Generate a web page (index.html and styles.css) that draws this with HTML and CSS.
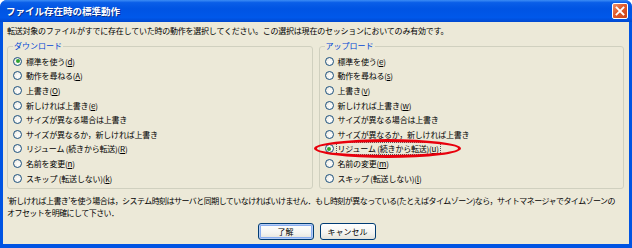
FILE: index.html
```html
<!DOCTYPE html>
<html lang="ja">
<head>
  <meta charset="UTF-8">
  <title>ファイル存在時の標準動作</title>
  <link rel="stylesheet" href="styles.css">
</head>
<body>
  <div class="window">
    <!-- Title bar -->
    <div class="titlebar">
      <span class="title">ファイル存在時の標準動作</span>
      <span class="close-btn">
        <svg width="10" height="10" viewBox="0 0 10 10"><path d="M1.5 1.5 L8.5 8.5 M8.5 1.5 L1.5 8.5" stroke="#fff" stroke-width="1.8" stroke-linecap="square"/></svg>
      </span>
    </div>

    <div class="client">
      <p class="intro">転送対象のファイルがすでに存在していた時の動作を選択してください。この選択は現在のセッションにおいてのみ有効です。</p>

      <div class="groups">
        <!-- Download -->
        <fieldset class="group">
          <legend>ダウンロード</legend>
          <div class="radio checked"><span class="mark"></span><span class="text">標準を使う(<u>d</u>)</span></div>
          <div class="radio"><span class="mark"></span><span class="text">動作を尋ねる(<u>A</u>)</span></div>
          <div class="radio"><span class="mark"></span><span class="text">上書き(<u>O</u>)</span></div>
          <div class="radio"><span class="mark"></span><span class="text">新しければ上書き(<u>e</u>)</span></div>
          <div class="radio"><span class="mark"></span><span class="text">サイズが異なる場合は上書き</span></div>
          <div class="radio"><span class="mark"></span><span class="text">サイズが異なるか，新しければ上書き</span></div>
          <div class="radio"><span class="mark"></span><span class="text">リジューム (続きから転送)(<u>R</u>)</span></div>
          <div class="radio"><span class="mark"></span><span class="text">名前を変更(<u>n</u>)</span></div>
          <div class="radio"><span class="mark"></span><span class="text">スキップ (転送しない)(<u>k</u>)</span></div>
        </fieldset>

        <!-- Upload -->
        <fieldset class="group">
          <legend>アップロード</legend>
          <div class="radio"><span class="mark"></span><span class="text">標準を使う(<u>e</u>)</span></div>
          <div class="radio"><span class="mark"></span><span class="text">動作を尋ねる(<u>s</u>)</span></div>
          <div class="radio"><span class="mark"></span><span class="text">上書き(<u>v</u>)</span></div>
          <div class="radio"><span class="mark"></span><span class="text">新しければ上書き(<u>w</u>)</span></div>
          <div class="radio"><span class="mark"></span><span class="text">サイズが異なる場合は上書き</span></div>
          <div class="radio"><span class="mark"></span><span class="text">サイズが異なるか，新しければ上書き</span></div>
          <div class="radio checked focused"><span class="mark"></span><span class="text">リジューム (続きから転送)(<u>u</u>)</span></div>
          <div class="radio"><span class="mark"></span><span class="text">名前の変更(<u>m</u>)</span></div>
          <div class="radio"><span class="mark"></span><span class="text">スキップ (転送しない)(<u>l</u>)</span></div>
        </fieldset>
      </div>

      <p class="note">'新しければ上書き'を使う場合は，システム時刻はサーバと同期していなければいけません．もし時刻が異なっている(たとえばタイムゾーン)なら，サイトマネージャでタイムゾーンの<br>オフセットを明確にして下さい．</p>

      <div class="buttons">
        <button class="btn btn-default">了解</button>
        <button class="btn">キャンセル</button>
      </div>
    </div>

    <!-- Red marker drawn over the screenshot -->
    <span class="marker"></span>
  </div>
</body>
</html>
```

FILE: styles.css
```css
*,
*::before,
*::after {
  box-sizing: border-box;
}

:root {
  --xp-blue: #0054e3;
  --xp-face: #ece9d8;
  --group-border: #d0d0bf;
  --legend-color: #0046d5;
  --text: #000000;
}

html,
body {
  margin: 0;
  padding: 0;
}

body {
  width: 632px;
  height: 248px;
  background: #ffffff;
  font-family: "Noto Sans CJK JP", "Liberation Sans", sans-serif;
  font-size: 8px;
  color: var(--text);
}

.window {
  position: relative;
  width: 632px;
  height: 248px;
  display: flex;
  flex-direction: column;
  background: var(--xp-blue);
  border-radius: 7px 7px 0 0;
  overflow: hidden;
}

/* Title bar */
.titlebar {
  height: 22px;
  flex: none;
  display: flex;
  align-items: center;
  justify-content: space-between;
  padding: 0 4px 0 6px;
  background: linear-gradient(to bottom, #3c8cf5 0%, #0a5ee8 12%, #0054e3 40%, #0058ea 80%, #0048d0 100%);
}

.title {
  color: #ffffff;
  font-weight: bold;
  font-size: 9.5px;
  text-shadow: 1px 1px 0 #0a2e8a;
}

.close-btn {
  width: 16px;
  height: 16px;
  display: flex;
  align-items: center;
  justify-content: center;
  border: 1px solid #ffffff;
  border-radius: 2px;
  background: linear-gradient(135deg, #f0926c 0%, #e05a2a 45%, #c8431a 100%);
}

/* Client area */
.client {
  flex: 1;
  margin: 0 3px 4px;
  padding: 3px 5px 0 4px;
  background: var(--xp-face);
  display: flex;
  flex-direction: column;
}

.intro {
  margin: 0;
  line-height: 12px;
  letter-spacing: -0.23px;
  white-space: nowrap;
}

.groups {
  display: flex;
  gap: 6px;
  margin-top: 3px;
}

.group {
  flex: 1;
  min-width: 0;
  margin: 0;
  padding: 2px 5px 3px 5px;
  border: 1px solid var(--group-border);
  border-radius: 3px;
}

.group legend {
  padding: 0 1px;
  margin-left: 0;
  line-height: 12px;
  color: var(--legend-color);
}

.radio {
  height: 14.6px;
  display: flex;
  align-items: center;
  gap: 2px;
  white-space: nowrap;
  letter-spacing: -0.2px;
}

.radio .mark {
  width: 9px;
  height: 9px;
  flex: none;
  border: 1px solid #1c5180;
  border-radius: 50%;
  background: radial-gradient(circle at 60% 60%, #ffffff 0%, #f4f3ee 50%, #dcdad0 100%);
  position: relative;
}

.radio.checked .mark::after {
  content: '';
  position: absolute;
  left: 1.5px;
  top: 1.5px;
  width: 4px;
  height: 4px;
  border-radius: 50%;
  background: #2fa32f;
}

.radio .text {
  line-height: 11px;
  padding: 0 1px;
  border: 1px dotted transparent;
}

.radio.focused .text {
  border-color: #555555;
}

u {
  text-underline-offset: 1px;
}

.note {
  margin: 6px 0 0;
  line-height: 12px;
  letter-spacing: -0.55px;
  white-space: nowrap;
}

.buttons {
  display: flex;
  justify-content: center;
  gap: 6px;
  margin-top: 4px;
  padding-left: 2px;
}

.btn {
  width: 56px;
  height: 17px;
  padding: 0;
  font-family: inherit;
  font-size: 8px;
  color: var(--text);
  border: 1px solid #003c74;
  border-radius: 3px;
  background: linear-gradient(to bottom, #ffffff 0%, #f4f4f0 60%, #e3e2da 100%);
}

.btn-default {
  box-shadow: inset 0 0 0 1px #b6cdf5, inset 0 0 0 2px #8aaef0;
}

/* Red ellipse annotation */
.marker {
  position: absolute;
  left: 314px;
  top: 139px;
  width: 147px;
  height: 19px;
  border: 3px solid #e8000c;
  border-radius: 50%;
  pointer-events: none;
}
```
